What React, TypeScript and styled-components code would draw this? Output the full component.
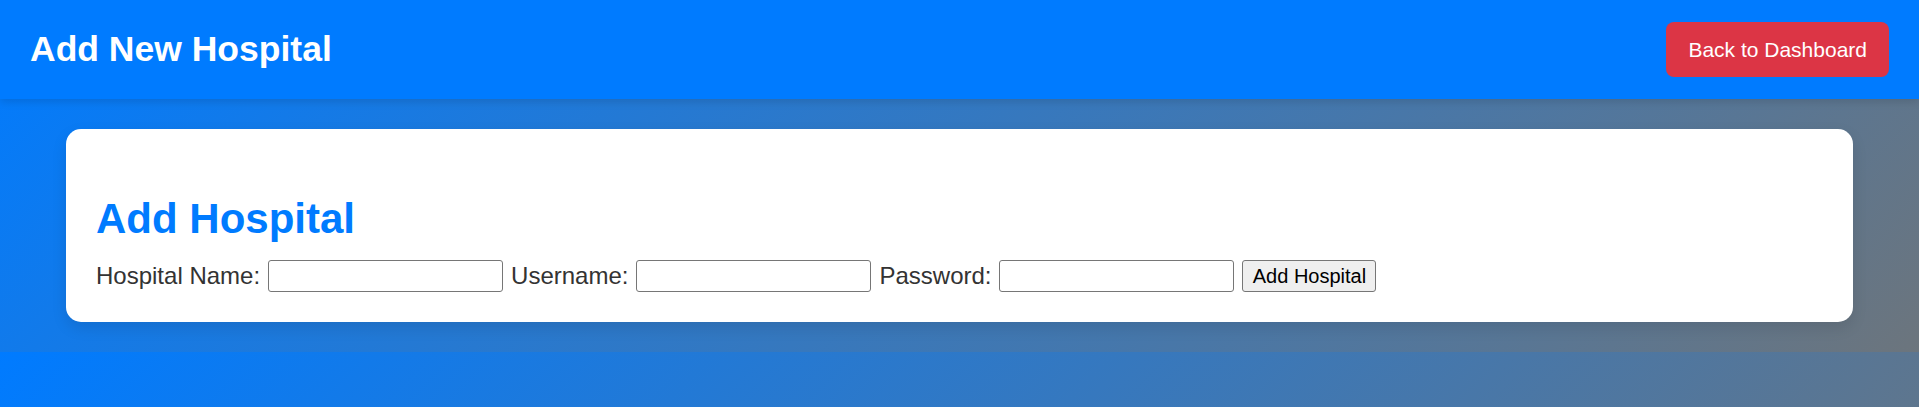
import React from 'react';
import styled, { createGlobalStyle } from 'styled-components';

const GlobalStyle = createGlobalStyle`
  body {
    margin: 0;
    font-family: "Liberation Sans", Arial, sans-serif;
    background: linear-gradient(135deg, #007bff, #6c757d);
  }
`;

const Header = styled.header`
  display: flex;
  align-items: center;
  justify-content: space-between;
  height: 99px;
  box-sizing: border-box;
  padding: 0 30px;
  background-color: #007bff;
  color: #fff;
  box-shadow: 0 3px 8px rgba(0, 0, 0, 0.12);
  position: relative;
`;

const Title = styled.h1`
  margin: 0;
  font-size: 35.5px;
  font-weight: bold;
`;

const DangerButton = styled.button`
  height: 55px;
  padding: 0 22px;
  border: none;
  border-radius: 8px;
  background-color: #dc3545;
  color: #fff;
  font-family: "Liberation Sans", Arial, sans-serif;
  font-size: 21px;
  cursor: pointer;
`;

const Main = styled.main`
  padding: 30px 66px;
`;

const Card = styled.section`
  background: #fff;
  border-radius: 15px;
  padding: 30px;
  box-shadow: 0 6px 15px rgba(0, 0, 0, 0.1);
`;

const CardTitle = styled.h2`
  margin: 36px 0 17px;
  font-size: 42px;
  font-weight: bold;
  color: #007bff;
`;

const Form = styled.form`
  display: flex;
  align-items: center;
  gap: 8px;
  height: 32px;
`;

const Label = styled.label`
  font-size: 24px;
  color: #333;
  white-space: nowrap;
`;

const Input = styled.input`
  width: 235px;
  height: 32px;
  box-sizing: border-box;
  border: 1px solid #767676;
  border-radius: 3px;
  padding: 1px 3px;
  font-family: "Liberation Sans", Arial, sans-serif;
  font-size: 20px;
  background: #fff;
`;

const SubmitButton = styled.button`
  width: 134px;
  height: 32px;
  box-sizing: border-box;
  border: 1px solid #767676;
  border-radius: 3px;
  background-color: #efefef;
  color: #000;
  font-family: "Liberation Sans", Arial, sans-serif;
  font-size: 20px;
  padding: 0;
`;

export default function App() {
  return (
    <>
      <GlobalStyle />
      <Header>
        <Title>Add New Hospital</Title>
        <DangerButton>Back to Dashboard</DangerButton>
      </Header>
      <Main>
        <Card>
          <CardTitle>Add Hospital</CardTitle>
          <Form onSubmit={(e) => e.preventDefault()}>
            <Label htmlFor="hname">Hospital Name:</Label>
            <Input id="hname" type="text" />
            <Label htmlFor="uname">Username:</Label>
            <Input id="uname" type="text" />
            <Label htmlFor="pword">Password:</Label>
            <Input id="pword" type="password" />
            <SubmitButton type="submit">Add Hospital</SubmitButton>
          </Form>
        </Card>
      </Main>
    </>
  );
}
